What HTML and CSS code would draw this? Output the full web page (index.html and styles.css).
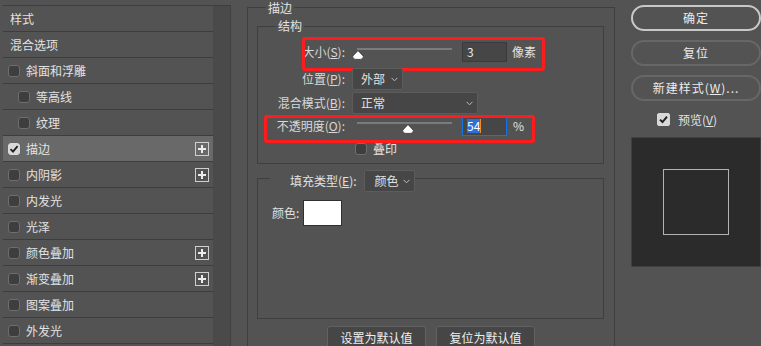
FILE: index.html
```html
<!DOCTYPE html>
<html lang="zh-CN">
<head>
    <meta charset="UTF-8">
    <title>图层样式</title>
    <link rel="stylesheet" href="styles.css">
</head>
<body>
    <div class="dialog">
        <div class="side">
            <ul class="style-list">
                <li class="row plain">样式</li>
                <li class="row plain">混合选项</li>
                <li class="row"><span class="box"></span>斜面和浮雕</li>
                <li class="row sub"><span class="box"></span>等高线</li>
                <li class="row sub"><span class="box"></span>纹理</li>
                <li class="row active">
                    <span class="box on"><svg width="10" height="10" viewBox="0 0 10 10"><path d="M1.5 5.2 L4 7.6 L8.6 2.2" fill="none" stroke="#1e1e1e" stroke-width="1.8"/></svg></span>描边
                    <svg class="add" width="14" height="14" viewBox="0 0 14 14"><rect x="0.5" y="0.5" width="13" height="13" fill="none" stroke="#cfcfcf"/><path d="M3 7 H11 M7 3 V11" stroke="#ececec" stroke-width="2"/></svg>
                </li>
                <li class="row">
                    <span class="box"></span>内阴影
                    <svg class="add" width="14" height="14" viewBox="0 0 14 14"><rect x="0.5" y="0.5" width="13" height="13" fill="none" stroke="#cfcfcf"/><path d="M3 7 H11 M7 3 V11" stroke="#ececec" stroke-width="2"/></svg>
                </li>
                <li class="row"><span class="box"></span>内发光</li>
                <li class="row"><span class="box"></span>光泽</li>
                <li class="row">
                    <span class="box"></span>颜色叠加
                    <svg class="add" width="14" height="14" viewBox="0 0 14 14"><rect x="0.5" y="0.5" width="13" height="13" fill="none" stroke="#cfcfcf"/><path d="M3 7 H11 M7 3 V11" stroke="#ececec" stroke-width="2"/></svg>
                </li>
                <li class="row">
                    <span class="box"></span>渐变叠加
                    <svg class="add" width="14" height="14" viewBox="0 0 14 14"><rect x="0.5" y="0.5" width="13" height="13" fill="none" stroke="#cfcfcf"/><path d="M3 7 H11 M7 3 V11" stroke="#ececec" stroke-width="2"/></svg>
                </li>
                <li class="row"><span class="box"></span>图案叠加</li>
                <li class="row"><span class="box"></span>外发光</li>
            </ul>
            <div class="scroll"></div>
        </div>

        <div class="center">
            <fieldset class="group outer">
                <legend>描边</legend>

                <fieldset class="group inner">
                    <legend>结构</legend>

                    <div class="field f-size">
                        <span class="label">大小(<u>S</u>):</span>
                        <div class="slider">
                            <div class="rail">
                                <svg class="thumb" style="left: 1%" width="12" height="10" viewBox="0 0 12 10"><path d="M6 0.6 L11.4 6.2 Q11.4 9.4 8.4 9.4 H3.6 Q0.6 9.4 0.6 6.2 Z" fill="#fff" stroke="#2a2a2a" stroke-width="0.8"/></svg>
                            </div>
                        </div>
                        <span class="num">3</span>
                        <span class="unit">像素</span>
                        <span class="mark"></span>
                    </div>

                    <div class="field f-pos">
                        <span class="label">位置(<u>P</u>):</span>
                        <div class="select w-pos">
                            <span>外部</span>
                            <svg width="7" height="5" viewBox="0 0 7 5"><path d="M0.5 0.8 L3.5 3.8 L6.5 0.8" fill="none" stroke="#bdbdbd"/></svg>
                        </div>
                    </div>

                    <div class="field f-mode">
                        <span class="label">混合模式(<u>B</u>):</span>
                        <div class="select w-mode">
                            <span>正常</span>
                            <svg width="7" height="5" viewBox="0 0 7 5"><path d="M0.5 0.8 L3.5 3.8 L6.5 0.8" fill="none" stroke="#bdbdbd"/></svg>
                        </div>
                    </div>

                    <div class="field f-opacity">
                        <span class="label">不透明度(<u>O</u>):</span>
                        <div class="slider">
                            <div class="rail">
                                <svg class="thumb" style="left: 54%" width="12" height="10" viewBox="0 0 12 10"><path d="M6 0.6 L11.4 6.2 Q11.4 9.4 8.4 9.4 H3.6 Q0.6 9.4 0.6 6.2 Z" fill="#fff" stroke="#2a2a2a" stroke-width="0.8"/></svg>
                            </div>
                        </div>
                        <span class="num focus"><span class="picked">54</span><span class="caret"></span></span>
                        <span class="unit pct">%</span>
                        <span class="mark"></span>
                    </div>

                    <div class="field f-over">
                        <span class="label"></span>
                        <span class="box"></span>
                        <span>叠印</span>
                    </div>
                </fieldset>

                <fieldset class="group fill">
                    <legend>
                        <span class="legend-row">
                            <span>填充类型(<u>E</u>):</span>
                            <span class="select w-fill">
                                <span>颜色</span>
                                <svg width="7" height="5" viewBox="0 0 7 5"><path d="M0.5 0.8 L3.5 3.8 L6.5 0.8" fill="none" stroke="#bdbdbd"/></svg>
                            </span>
                        </span>
                    </legend>
                    <div class="fill-body">
                        <span>颜色:</span>
                        <span class="swatch"></span>
                    </div>
                </fieldset>

                <div class="actions">
                    <button type="button">设置为默认值</button>
                    <button type="button">复位为默认值</button>
                </div>
            </fieldset>
        </div>

        <div class="side-right">
            <div class="pill primary">确定</div>
            <div class="pill">复位</div>
            <div class="pill">新建样式(<u>W</u>)...</div>
            <div class="preview-check">
                <span class="box on big"><svg width="11" height="11" viewBox="0 0 11 11"><path d="M2 5.6 L4.5 8 L9 2.6" fill="none" stroke="#1e1e1e" stroke-width="1.9"/></svg></span>
                <span>预览(<u>V</u>)</span>
            </div>
            <div class="preview">
                <div class="shape"></div>
            </div>
        </div>
    </div>
</body>
</html>
```

FILE: styles.css
```css
* {
  box-sizing: border-box;
}

html, body {
  margin: 0;
  height: 100%;
}

body {
  background-color: #535353;
  color: #e2e2e2;
  font: 12px/14px "Noto Sans CJK SC", "Noto Sans", sans-serif;
  overflow: hidden;
}

u {
  text-underline-offset: 1px;
}

.dialog {
  display: flex;
  height: 346px;
  overflow: hidden;
}

/* left list */
.side {
  display: flex;
  margin: 5px 0 0 3px;
  border-top: 1px solid #3e3e3e;
  height: 341px;
  overflow: hidden;
}

.style-list {
  width: 210px;
  margin: 0;
  padding: 0;
  list-style: none;
}

.row {
  display: flex;
  align-items: center;
  height: 26px;
  padding-left: 5px;
  border-bottom: 1px solid #3d3d3d;
}

.row.plain {
  padding-left: 7px;
}

.row.sub {
  padding-left: 15px;
}

.row.active {
  background-color: #696969;
}

.box {
  flex: none;
  width: 12px;
  height: 12px;
  margin-right: 6px;
  border: 1px solid #6e6e6e;
  border-radius: 3px;
  background-color: #3e3e3e;
  display: flex;
  align-items: center;
  justify-content: center;
}

.box.on {
  background-color: #d9d9d9;
  border-color: #d9d9d9;
}

.box.big {
  width: 13px;
  height: 13px;
  border-radius: 2px;
  margin-right: 8px;
}

.add {
  margin-left: auto;
  margin-right: 4px;
}

.scroll {
  width: 18px;
  background-color: #4a4a4a;
  border-right: 1px solid #3f3f3f;
}

/* middle */
.center {
  width: 384px;
  height: 346px;
  padding-left: 16px;
  overflow: hidden;
}

.group {
  margin: 0;
  padding: 0;
  min-width: 0;
  border: 1px solid #3f3f3f;
}

.group legend {
  padding: 0 2px;
  margin-left: 18px;
  line-height: 14px;
}

.outer {
  height: 360px;
}

.outer > legend {
  padding-top: 1px;
  line-height: 13px;
}

.inner {
  margin: 5px 10px 0 9px;
  padding-bottom: 8px;
}

.field {
  position: relative;
  display: flex;
  align-items: center;
}

.label {
  flex: none;
  width: 87px;
  margin-right: 7px;
  text-align: right;
  color: #d9d9d9;
}

.f-size {
  height: 20px;
  margin-top: 9px;
}

.f-pos {
  height: 22px;
  margin-top: 6px;
}

.f-mode {
  height: 22px;
  margin-top: 2px;
}

.f-opacity {
  height: 20px;
  margin-top: 2px;
}

.f-over {
  height: 12px;
  margin-top: 7px;
}

.f-over .box {
  margin-left: 3px;
}

.slider {
  position: relative;
  flex: none;
  width: 100px;
  height: 20px;
}

.rail {
  position: absolute;
  left: 5px;
  right: 0;
  top: 6px;
  height: 2px;
  background-color: #7b7b7b;
}

.thumb {
  position: absolute;
  top: 2px;
  margin-left: -6px;
}

.num {
  flex: none;
  display: flex;
  align-items: center;
  width: 45px;
  height: 20px;
  margin-left: 10px;
  padding-left: 4px;
  border: 1px solid #3a3a3a;
  background-color: #464646;
  color: #e8e8e8;
}

.num.focus {
  border-color: #1473e6;
}

.picked {
  background-color: #2a6fdc;
  color: #fff;
}

.caret {
  width: 1px;
  height: 14px;
  background-color: #f28a22;
}

.unit {
  margin-left: 5px;
}

.unit.pct {
  margin-left: 6px;
}

.mark {
  position: absolute;
  border: 3px solid #ff1c1c;
  border-radius: 3px;
  pointer-events: none;
}

.f-size .mark {
  left: 44px;
  top: -5px;
  width: 243px;
  height: 34px;
}

.f-opacity .mark {
  left: 6px;
  top: -1px;
  width: 271px;
  height: 28px;
}

.select {
  display: flex;
  align-items: center;
  justify-content: space-between;
  height: 22px;
  padding: 0 4px 0 8px;
  background-color: #464646;
  border: 1px solid #5c5c5c;
  border-radius: 2px;
}

.w-pos {
  width: 51px;
}

.w-mode {
  width: 126px;
}

.fill {
  margin: 0 10px 0 9px;
}

.fill legend {
  margin-left: 12px;
  padding: 6px 0 0 20px;
}

.legend-row {
  display: flex;
  align-items: center;
}

.w-fill {
  width: 51px;
  margin-left: 7px;
  padding-left: 10px;
}

.fill-body {
  display: flex;
  align-items: flex-start;
  height: 126px;
  padding: 8px 0 0 14px;
}

.fill-body > span:first-child {
  line-height: 26px;
  margin-right: 4px;
}

.swatch {
  width: 39px;
  height: 26px;
  background-color: #fff;
  border: 1px solid #303030;
}

.actions {
  display: flex;
  justify-content: center;
  gap: 10px;
  margin-top: 7px;
}

.actions button {
  width: 99px;
  height: 24px;
  padding: 0;
  font: inherit;
  color: #eee;
  background-color: #464646;
  border: 1px solid #626262;
  border-radius: 3px;
}

/* right */
.side-right {
  width: 130px;
  margin-left: 16px;
  display: flex;
  flex-direction: column;
}

.pill {
  height: 26px;
  margin-top: 9px;
  border: 2px solid #676767;
  border-radius: 13px;
  text-align: center;
  line-height: 22px;
  color: #ececec;
  letter-spacing: 1px;
}

.pill.primary {
  margin-top: 5px;
  border-color: #c8c8c8;
}

.preview-check {
  display: flex;
  align-items: center;
  height: 13px;
  margin-top: 12px;
  padding-left: 26px;
}

.preview {
  height: 130px;
  margin-top: 11px;
  background-color: #2b2b2b;
  border: 1px solid #404040;
  display: flex;
  align-items: center;
  justify-content: center;
}

.shape {
  width: 66px;
  height: 66px;
  border: 1px solid #b3b3b3;
}
```
